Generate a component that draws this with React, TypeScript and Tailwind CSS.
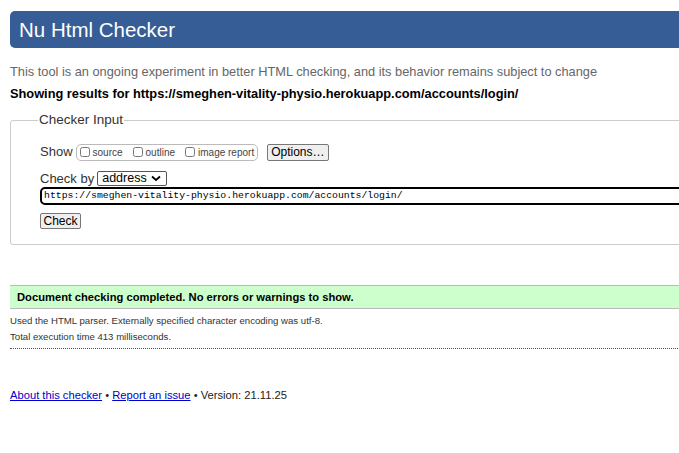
export default function App() {
  return (
    <div className="w-[679px] h-[453px] overflow-hidden bg-white font-['Liberation_Sans',Arial,sans-serif] text-[#222]">
      <div className="w-[760px] pl-[10px] pt-[11px]">
        <h1 className="h-[37px] bg-[#365d95] rounded-l-[5px] text-white text-[20.5px] leading-[38px] pl-[9px]">
          Nu Html Checker
        </h1>

        <p className="mt-[15px] text-[12.8px] text-[#666] leading-[18px]">
          This tool is an ongoing experiment in better HTML checking, and its behavior remains subject to change
        </p>
        <p className="mt-[4px] text-[12.8px] font-bold text-black leading-[18px]">
          Showing results for https://smeghen-vitality-physio.herokuapp.com/accounts/login/
        </p>

        <fieldset className="mt-[9px] border border-[#ccc] rounded-[3px] pl-[29px] pb-[15px]">
          <legend className="ml-[-2px] px-[1px] text-[13.5px] leading-[16px] text-[#333]">Checker Input</legend>

          <div className="mt-[15px] h-[18px] flex items-center text-[13px] text-[#333]">
            <span>Show</span>
            <span className="ml-[3px] flex items-center h-[17px] border border-[#bbb] rounded-[5px] px-[3px] text-[10px] text-[#444]">
              <label className="flex items-center">
                <input type="checkbox" className="w-[10px] h-[10px] mr-[3px]" />source
              </label>
              <label className="flex items-center ml-[10px]">
                <input type="checkbox" className="w-[10px] h-[10px] mr-[3px]" />outline
              </label>
              <label className="flex items-center ml-[10px]">
                <input type="checkbox" className="w-[10px] h-[10px] mr-[3px]" />image report
              </label>
            </span>
            <button className="ml-[9px] h-[17px] px-[3px] border border-[#777] rounded-[2px] bg-[#efefef] text-[12px] leading-[15px] text-black">
              Options…
            </button>
          </div>

          <div className="mt-[10px] h-[15px] flex items-center text-[13px] text-[#333]">
            <span>Check by</span>
            <span className="ml-[3px] flex items-center justify-between w-[70px] h-[15px] border border-[#555] rounded-[2px] pl-[4px] pr-[5px] text-[12.5px] leading-[13px] text-black">
              address
              <svg width="10" height="7" viewBox="0 0 10 7">
                <path d="M1 1.5 L5 5 L9 1.5" fill="none" stroke="#000" strokeWidth="1.8" />
              </svg>
            </span>
          </div>

          <div className="mt-[1px] h-[18px] border-2 border-black rounded-l-[5px] pl-[2px] font-['Liberation_Mono',monospace] text-[9.8px] leading-[14px] text-black">
            https://smeghen-vitality-physio.herokuapp.com/accounts/login/
          </div>

          <button className="mt-[8px] block h-[16px] w-[41px] border border-[#777] rounded-[2px] bg-[#efefef] text-[12px] leading-[14px] text-black">
            Check
          </button>
        </fieldset>

        <div className="mt-[40px] h-[24px] bg-[#ccffcc] border-y border-[#bbb] pl-[7px] text-[11.2px] font-bold text-black leading-[22px]">
          Document checking completed. No errors or warnings to show.
        </div>

        <p className="mt-[5px] text-[9.6px] text-[#333] leading-[14px]">
          Used the HTML parser. Externally specified character encoding was utf-8.
        </p>
        <p className="mt-[2px] text-[9.6px] text-[#333] leading-[14px]">Total execution time 413 milliseconds.</p>
        <div className="mt-[4px] border-b border-dotted border-[#555]" />

        <p className="mt-[38px] text-[11.2px] text-[#222] leading-[16px]">
          <a href="#" className="text-[#00c] underline">About this checker</a>
          {" • "}
          <a href="#" className="text-[#00c] underline">Report an issue</a>
          {" • Version: 21.11.25"}
        </p>
      </div>
    </div>
  );
}
